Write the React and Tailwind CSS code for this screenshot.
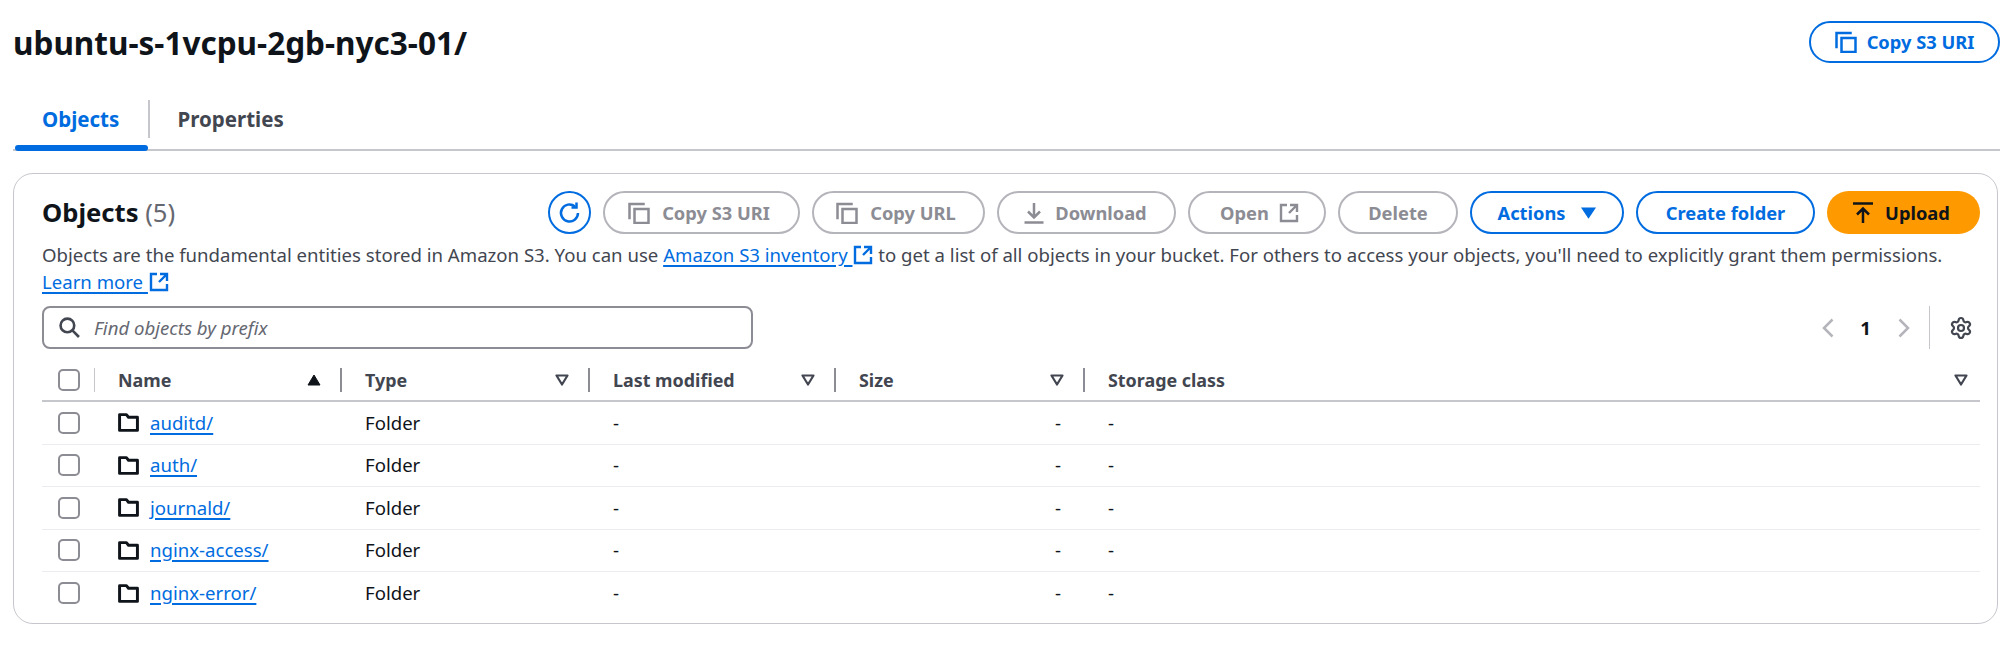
import React from 'react';
import { Settings } from 'lucide-react';

// ─── Data ─────────────────────────────────────────────────────
const rows = ['auditd/', 'auth/', 'journald/', 'nginx-access/', 'nginx-error/'];

const columns = [
  { label: 'Name', sorted: true },
  { label: 'Type' },
  { label: 'Last modified' },
  { label: 'Size' },
  { label: 'Storage class', last: true },
];

const gridCols = 'grid grid-cols-[53px_247px_248px_246px_249px_1fr]';

// ─── Icons ────────────────────────────────────────────────────
const CopyIcon = ({ className }) => (
  <svg viewBox="0 0 22 22" fill="none" stroke="currentColor" strokeWidth="2.5" className={className}>
    <path d="M1.500 16V2h14" strokeLinecap="square" />
    <rect x="6.500" y="7" width="14" height="14" />
  </svg>
);

const ExternalIcon = ({ className }) => (
  <svg viewBox="0 0 20 20" fill="none" stroke="currentColor" strokeWidth="2.4" className={className}>
    <path d="M8 2H2v16h16v-6" />
    <path d="M11 2h7v7M18 2l-8 8" />
  </svg>
);

const RefreshIcon = () => (
  <svg viewBox="0 0 24 24" fill="none" stroke="currentColor" strokeWidth="2.5" className="w-[24px] h-[24px]">
    <path d="M20 12a8.500 8.500 0 1 1-3-6.500" />
    <path d="M18.500 1.500v5h-5" />
  </svg>
);

const DownloadIcon = () => (
  <svg viewBox="0 0 22 22" fill="none" stroke="currentColor" strokeWidth="2.5" className="w-[22px] h-[22px]">
    <path d="M11 1v14M5 9.500l6 6 6-6M1.500 20.500h19" />
  </svg>
);

const UploadIcon = () => (
  <svg viewBox="0 0 22 22" fill="none" stroke="currentColor" strokeWidth="2.5" className="w-[22px] h-[22px]">
    <path d="M1 1.500h20M11 21V7M5 12.500l6-6 6 6" />
  </svg>
);

const FolderIcon = () => (
  <svg viewBox="0 0 20 20" fill="none" stroke="#0f141a" strokeWidth="2.800" strokeLinejoin="round" className="w-[21px] h-[21px] shrink-0">
    <path d="M1.500 2.500h6.500l2 2.500h8.500v12.500h-17z" />
  </svg>
);

const SearchIcon = () => (
  <svg viewBox="0 0 20 20" fill="none" stroke="#424650" strokeWidth="2.500" className="w-[21px] h-[21px]">
    <circle cx="8" cy="8" r="6.500" />
    <path d="M13 13l6 6" />
  </svg>
);

const SortTriangle = ({ filled }) => (
  <svg viewBox="0 0 14 12" className="w-[14px] h-[12px]">
    {filled ? (
      <path d="M7 1l6 10H1z" fill="#0f141a" stroke="#0f141a" strokeWidth="1" />
    ) : (
      <path d="M1.500 1.500h11L7 10.500z" fill="none" stroke="#424650" strokeWidth="2.200" strokeLinejoin="round" />
    )}
  </svg>
);

// ─── Small parts ──────────────────────────────────────────────
const Button = ({ icon, iconRight, children, disabled, className = '' }) => (
  <button
    className={`rounded-full border-[2.5px] flex items-center justify-center gap-[10px] font-bold text-[18.300px] ${
      disabled ? 'border-[#b4b4bb] text-[#8c8c94]' : 'border-[#006ce0] text-[#006ce0]'
    } ${className}`}
  >
    {icon}
    {children}
    {iconRight}
  </button>
);

const Checkbox = () => (
  <div className="w-[22px] h-[22px] rounded-[5px] border-[2.5px] border-[#8c8c94] bg-white" />
);

const Link = ({ children }) => (
  <a href="#" className="text-[#006ce0] underline underline-offset-[3px] decoration-[1.5px]">{children}</a>
);

// ─── Page ─────────────────────────────────────────────────────
const App = () => {
  return (
    <div className="w-[2000px] h-[653px] overflow-hidden bg-white text-[#0f141a] font-['Noto_Sans',sans-serif] text-[18.600px]">
      <div className="flex items-start justify-between pt-[21px] pl-[13px]">
        <h1 className="text-[31.500px] font-bold leading-[44px]">ubuntu-s-1vcpu-2gb-nyc3-01/</h1>
        <Button icon={<CopyIcon className="w-[22px] h-[22px]" />} className="w-[191px] h-[42px]">Copy S3 URI</Button>
      </div>

      {/* Tabs */}
      <div className="flex mt-[29px] ml-[13px] h-[57px] border-b-[2px] border-[#c6c6cd]">
        <div className="relative w-[135px] pl-[29px] pt-[10px] font-bold text-[20.500px] text-[#006ce0]">
          Objects
          <div className="absolute left-[2px] right-0 bottom-[-2px] h-[6px] rounded-full bg-[#006ce0]" />
        </div>
        <div className="mt-[6px] h-[38px] w-[1.500px] bg-[#c6c6cd]" />
        <div className="pl-[28px] pt-[10px] font-bold text-[20.500px] text-[#424650]">Properties</div>
      </div>

      {/* Objects card */}
      <div className="mt-[22px] ml-[13px] w-[1985px] h-[451px] rounded-[20px] border-[1.500px] border-[#c6c6cd] pl-[28px] pr-[17px] pt-[17px]">
        <div className="flex items-center h-[43px]">
          <h2 className="text-[25.600px] font-bold pt-[1px]">
            Objects <span className="font-normal text-[#656871]">(5)</span>
          </h2>
          <div className="ml-auto flex gap-[12px]">
            <button className="w-[43px] h-[43px] rounded-full border-[2.5px] border-[#006ce0] text-[#006ce0] flex items-center justify-center">
              <RefreshIcon />
            </button>
            <Button disabled icon={<CopyIcon className="w-[22px] h-[22px] mr-[2px]" />} className="w-[197px] h-[43px] pr-[5px]">Copy S3 URI</Button>
            <Button disabled icon={<CopyIcon className="w-[22px] h-[22px] mr-[2px]" />} className="w-[173px] h-[43px] pr-[5px]">Copy URL</Button>
            <Button disabled icon={<DownloadIcon />} className="w-[179px] h-[43px] pr-[3px]">Download</Button>
            <Button disabled iconRight={<ExternalIcon className="w-[20px] h-[20px]" />} className="w-[138px] h-[43px] pl-[5px]">Open</Button>
            <Button disabled className="w-[120px] h-[43px]">Delete</Button>
            <Button iconRight={<svg viewBox="0 0 16 12" className="w-[15px] h-[12px] ml-[6px]"><path d="M0 0h16L8 12z" fill="currentColor" /></svg>} className="w-[154px] h-[43px]">Actions</Button>
            <Button className="w-[179px] h-[43px]">Create folder</Button>
            <button className="w-[153px] h-[43px] pr-[5px] rounded-full bg-[#ff9900] text-[#0f141a] font-bold text-[18.300px] flex items-center justify-center gap-[11px]">
              <UploadIcon />
              Upload
            </button>
          </div>
        </div>

        <p className="leading-[27px] mt-[7px] text-[#424650] whitespace-nowrap">
          Objects are the fundamental entities stored in Amazon S3. You can use{' '}
          <Link>Amazon S3 inventory <ExternalIcon className="inline w-[20px] h-[20px] ml-[1px] align-[-3px]" /></Link>{' '}
          to get a list of all objects in your bucket. For others to access your objects, you'll need to explicitly grant them permissions.<br />
          <Link>Learn more <ExternalIcon className="inline w-[20px] h-[20px] ml-[1px] align-[-3px]" /></Link>
        </p>

        {/* Search + pagination */}
        <div className="flex items-center h-[43px] mt-[11px]">
          <div className="w-[711px] h-[43px] rounded-[8px] border-[2.5px] border-[#8c8c94] flex items-center pl-[15px] gap-[14px]">
            <SearchIcon />
            <span className="italic text-[#656871]">Find objects by prefix</span>
          </div>
          <div className="ml-auto flex items-center h-[43px] text-[#b4b4bb]">
            <svg viewBox="0 0 12 20" fill="none" stroke="currentColor" strokeWidth="2.500" className="w-[12px] h-[20px]"><path d="M10.500 1.500L2 10l8.500 8.500" /></svg>
            <span className="w-[64px] text-center font-bold text-[#0f141a]">1</span>
            <svg viewBox="0 0 12 20" fill="none" stroke="currentColor" strokeWidth="2.500" className="w-[12px] h-[20px]"><path d="M1.500 1.500L10 10l-8.500 8.500" /></svg>
            <div className="w-[1.500px] h-[43px] bg-[#c6c6cd] ml-[19px]" />
            <Settings className="w-[24px] h-[24px] text-[#424650] ml-[19px] mr-[7px]" strokeWidth={2.2} />
          </div>
        </div>

        {/* Table */}
        <div className={`${gridCols} h-[53px] pt-[11px] items-center border-b-[2px] border-[#c6c6cd] text-[17.900px]`}>
          <div className="flex items-center h-[24px] pl-[16px] relative">
            <Checkbox />
            <div className="absolute right-0 top-0 w-[1.500px] h-[24px] bg-[#c6c6cd]" />
          </div>
          {columns.map((c) => (
            <div key={c.label} className="flex items-center justify-between h-[24px] pl-[23px] font-bold text-[#424650] pr-[19px] border-r-[2.500px] border-[#8c8c94] last:border-r-0 first:text-[#0f141a] last:pr-[12px]">
              {c.label}
              <SortTriangle filled={c.sorted} />
            </div>
          ))}
        </div>
        {rows.map((name, i) => (
          <div key={name} className={`${gridCols} h-[42.500px] items-center ${i < rows.length - 1 ? 'border-b-[1.500px] border-[#ebebf0]' : ''}`}>
            <div className="pl-[16px]"><Checkbox /></div>
            <div className="pl-[23px] flex items-center gap-[11px]">
              <FolderIcon />
              <Link>{name}</Link>
            </div>
            <div className="pl-[23px]">Folder</div>
            <div className="pl-[23px]">-</div>
            <div className="text-right pr-[24px]">-</div>
            <div className="pl-[23px]">-</div>
          </div>
        ))}
      </div>
    </div>
  );
};

export default App;
